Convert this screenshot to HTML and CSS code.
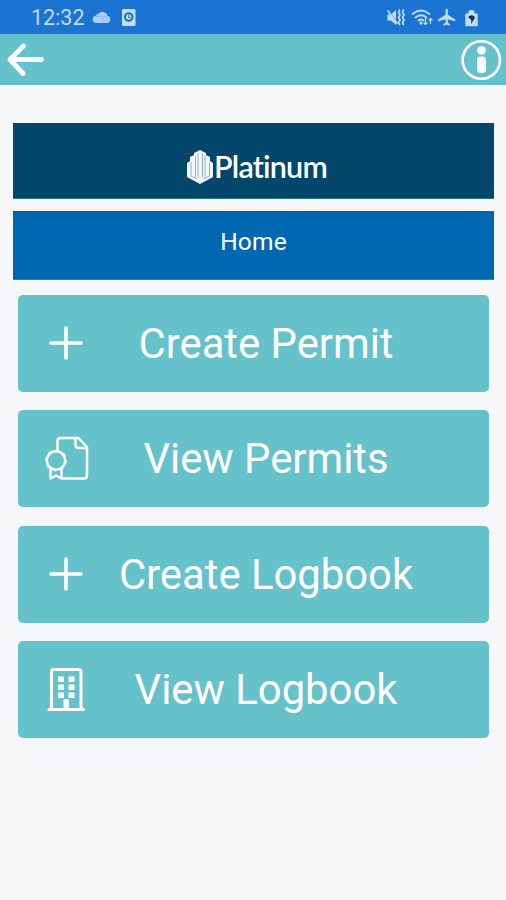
FILE: index.html
```html
<!DOCTYPE html>
<html lang="en">
<head>
<meta charset="utf-8">
<title>Platinum - Home</title>
<link rel="stylesheet" href="styles.css">
</head>
<body>
<div class="status">
  <span class="clock">12:32</span>
  <svg class="notes" width="45" height="34" viewBox="92 0 45 34">
    <path fill="#a9ccf3" d="M96 23a3.700 3.700 0 0 1-.4-7.300 4 4 0 0 1 3.200-2.200 5 5 0 0 1 8.700 2.300 3.700 3.700 0 0 1 0 7.200z"/>
    <path fill="none" stroke="#82b3e9" stroke-width=".8" d="M96 16.500q3-1.500 5 1l3 2M102 17.500q3-2 5-1"/>
    <rect x="122" y="9" width="13.500" height="17" rx="1.500" fill="#c3dcf7"/>
    <circle cx="128.700" cy="17" r="3.800" fill="#c3dcf7" stroke="#1b70cb" stroke-width="2"/>
    <path d="M128.700 14.500v3h2" fill="none" stroke="#1b70cb"/>
  </svg>
  <svg class="system" width="95" height="34" viewBox="385 0 95 34">
    <g fill="#c3dcf7">
      <path d="M387.500 14.500h3.500l5-4.500v15l-5-4.500h-3.500z"/>
      <path d="M445.600 9.500q1.100-1.500 2.200 0v5.300l7.500 4.700v1.700l-7.500-2v3.300l2.200 1.700v1.300l-3.300-.8-3.300.8v-1.300l2.200-1.700v-3.300l-7.500 2v-1.700l7.500-4.700z"/>
      <path d="M466 13.500h2.500v-2.500q3-2 6 0v2.500h2.500q.7 0 .7.700v11.300q0 .8-.7.800h-11q-.7 0-.7-.8v-11.300q0-.7.700-.7z"/>
    </g>
    <path d="M387 9.500l11 14" stroke="#1b74d2" stroke-width="1.800"/>
    <g fill="none" stroke="#c3dcf7" stroke-width="1.700" stroke-linecap="round">
      <path d="M388 11l9 12M399.500 10l-1 2.500 1.500 2.500-1.500 2.500 1.500 2.500-1.500 2.500 1 2M403.500 10l-1 2.500 1.500 2.500-1.500 2.500 1.500 2.500-1.500 2.500 1 2"/>
      <path d="M412.500 14q8.500-7 17 0M415.500 17.500q5.500-4.500 11 0M418.500 20.500q2.500-2 5 0"/>
      <path stroke-width="1.200" d="M425.500 18.500v6m-1.500-1.500l1.500 1.500 1.500-1.500M430.500 23.500v-5m-1.500 1.500l1.500-1.500 1.500 1.500"/>
    </g>
    <circle cx="421" cy="23" r="1.500" fill="#c3dcf7"/>
    <path fill="#14334f" d="M468 17q3-3 6.500-.5 1 2-1 3.500l-2.500 4 .3-4z"/>
  </svg>
</div>
<header class="appbar">
  <svg width="48" height="50" viewBox="0 34 48 50"><path d="M23.500 46L10 59.500L23 73.500M10 59.500H41.500" fill="none" stroke="#fff" stroke-width="4.800" stroke-linecap="round" stroke-linejoin="round"/></svg>
  <svg width="48" height="50" viewBox="458 34 48 50"><circle cx="481.300" cy="60" r="18.700" fill="none" stroke="#fff" stroke-width="2.600"/><circle cx="481.500" cy="50.300" r="4.400" fill="#fff"/><rect x="477" y="56.500" width="9" height="16.500" rx="3.500" fill="#fff"/></svg>
</header>
<main>
  <div class="brand">
    <svg width="28" height="36" viewBox="0 0 28 36"><path fill="#f2f7fb" d="M1 14l3-2V8l4-2V4l3-1.500L14 1l3 1.500L20 4v2L24 8v4l3 2v14l-13 7L1 28z"/><path d="M5 13v14l6 3M9.500 7v21.500M12 4v24.500M16.500 4v24.500M19 7v21.500M23.500 13v14l-6 3" fill="none" stroke="#8fa6ba" stroke-width=".9"/></svg>
    <span>Platinum</span>
  </div>
  <h1 class="title">Home</h1>
  <nav class="menu">
    <a class="item"><svg width="48" height="48" viewBox="0 0 48 48"><path d="M24 9v30M9 24h30" stroke="#fff" stroke-width="3.600" stroke-linecap="round"/></svg><span>Create Permit</span></a>
    <a class="item"><svg width="48" height="48" viewBox="0 0 48 48"><g fill="none" stroke="#fff" stroke-width="2.500" stroke-linejoin="round"><path d="M15.500 17V7q0-3 3-3H36.500l8.500 9v28.500q0 3-3 3H20.500M33.500 4V11q0 3 3 3H45"/><circle cx="14" cy="26.500" r="9.200"/><circle cx="14" cy="26.500" r="10.400" stroke-width="1.200" stroke-dasharray="3 5.170"/><path d="M8.500 34.500V44.500l5.500-3 5.500 3V34.500"/></g></svg><span>View Permits</span></a>
    <a class="item"><svg width="48" height="48" viewBox="0 0 48 48"><path d="M24 9v30M9 24h30" stroke="#fff" stroke-width="3.600" stroke-linecap="round"/></svg><span>Create Logbook</span></a>
    <a class="item"><svg width="48" height="48" viewBox="0 0 48 48"><path d="M9.500 44V7q0-2.500 2.500-2.500h24.500q2.500 0 2.500 2.500V44" fill="none" stroke="#fff" stroke-width="3"/><path d="M7 44.500h34.500" stroke="#fff" stroke-width="3" stroke-linecap="round"/><path fill="#fff" d="M16 11.500h6v5.500h-6zM26.500 11.500h6v5.500h-6zM16 19.500h6v5.500h-6zM26.500 19.500h6v5.500h-6zM16 27.500h6v5.500h-6zM26.500 27.500h6v5.500h-6zM21.500 44v-8.500q0-1.500 1.500-1.500h2.500q1.500 0 1.500 1.500v8.500z"/></svg><span>View Logbook</span></a>
  </nav>
</main>
</body>
</html>
```

FILE: styles.css
```css
body { margin: 0; min-height: 900px; background: #f5f7f9; font-family: Roboto, sans-serif; color: #fff; }
svg { display: block; flex: none; }
.status { display: flex; align-items: center; height: 34px; background: #1b74d2; }
.clock { width: 61px; height: 33px; padding: 1px 0 0 31px; font-size: 21.5px; line-height: 34px; color: #c3dcf7; }
.system { margin-left: auto; margin-right: 26px; }
.appbar { display: flex; justify-content: space-between; height: 50.5px; background: #66c2ca; }
main { padding: 38.5px 12px 0 13px; }
.brand { display: flex; align-items: center; justify-content: center; box-sizing: border-box; height: 76px; padding: 12px 0 0 6px; background: #03476c; border-bottom: 1px solid #396c8b; }
.brand span { margin-top: -2px; font: 600 30.5px/36px Lato, sans-serif; letter-spacing: -0.8px; }
.title { box-sizing: border-box; height: 68.5px; margin: 12px 0 0; padding-top: 14px; background: #0067b1; border-bottom: 1px solid #3c78a8; font-size: 24.5px; font-weight: 400; line-height: 34px; letter-spacing: .2px; text-align: center; }
.menu { display: flex; flex-direction: column; gap: 18.5px; margin: 15px 5px 0; }
.item { display: flex; align-items: center; box-sizing: border-box; height: 97px; padding: 0 71px 0 24px; border-radius: 5px; background: #66c2ca; }
.item svg { margin-top: -1px; }
.item span { flex: 1; margin-left: 24px; font-size: 41.8px; line-height: 97px; white-space: nowrap; text-align: center; }
```
